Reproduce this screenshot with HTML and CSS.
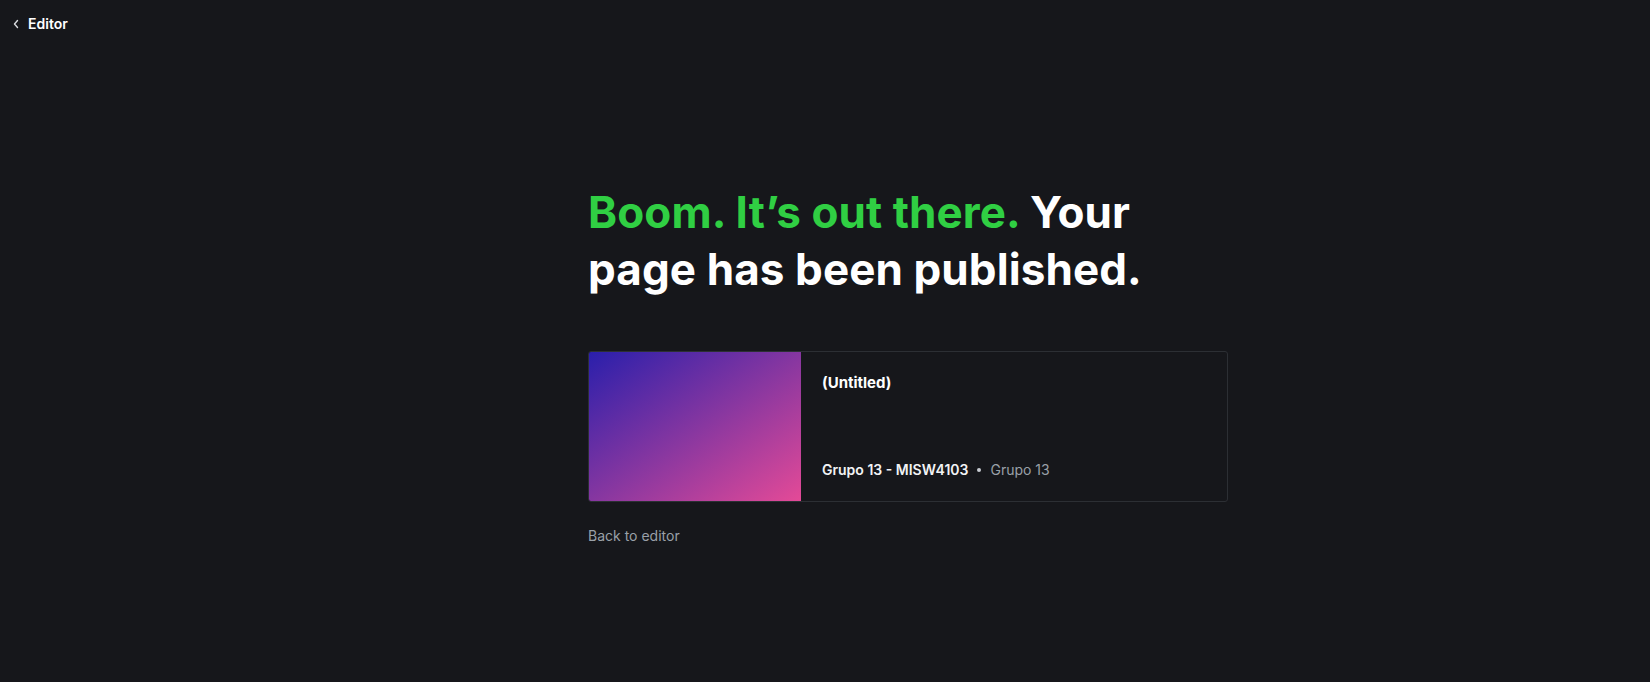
FILE: index.html
```html
<!DOCTYPE html>
<html lang="en">
<head>
<meta charset="utf-8">
<title>Published</title>
<link rel="stylesheet" href="styles.css">
</head>
<body>
<header class="topbar">
  <a class="back-link" href="#">
    <svg class="chev" width="8" height="10" viewBox="0 0 8 10" aria-hidden="true"><path d="M5.5 1.5L2.5 5l3 3.5" fill="none" stroke="currentColor" stroke-width="1.4" stroke-linecap="round" stroke-linejoin="round"/></svg>
    <span>Editor</span>
  </a>
</header>
<main class="main">
  <section class="content">
    <h1 class="headline"><span class="green">Boom. It’s out there.</span> Your page has been published.</h1>
    <div class="card">
      <div class="card-image"></div>
      <div class="card-body">
        <div class="card-title">(Untitled)</div>
        <div class="card-meta">
          <span class="site">Grupo 13 - MISW4103</span>
          <span class="dot"></span>
          <span class="author">Grupo 13</span>
        </div>
      </div>
    </div>
    <a class="back-editor" href="#">Back to editor</a>
  </section>
</main>
</body>
</html>
```
FILE: styles.css
```css
* { box-sizing: border-box; }
html, body { margin: 0; padding: 0; }
body {
  background: #16171b;
  color: #ffffff;
  font-family: Inter, "Noto Sans", "Liberation Sans", sans-serif;
  width: 1650px;
  height: 682px;
  overflow: hidden;
}
a { text-decoration: none; color: inherit; }
.topbar {
  height: 44px;
  padding: 13px 0 0 12px;
}
.back-link {
  display: inline-flex;
  align-items: center;
  gap: 8px;
  font-size: 14px;
  line-height: 20px;
  font-weight: 600;
  color: #ffffff;
}
.chev { color: #d8dade; }
.main {
  padding: 140px 0 0 588px;
}
.content {
  width: 640px;
}
.headline {
  margin: 0;
  max-width: 600px;
  font-size: 44px;
  line-height: 57px;
  font-weight: 700;
  letter-spacing: 0.1px;
  color: #ffffff;
}
.green { color: #30cf43; }
.card {
  margin-top: 53px;
  height: 151px;
  display: flex;
  border: 1px solid #2c2f34;
  border-radius: 3px;
  overflow: hidden;
  background: #16171b;
}
.card-image {
  width: 212px;
  flex: none;
  background: linear-gradient(to bottom right, #2a1fab 0%, #8937a0 52%, #e44a97 100%);
}
.card-body {
  flex: 1;
  display: flex;
  flex-direction: column;
  justify-content: space-between;
  padding: 20px 20px 21px 21px;
}
.card-title {
  font-size: 15px;
  line-height: 22px;
  font-weight: 700;
  color: #ffffff;
}
.card-meta {
  display: flex;
  align-items: center;
  font-size: 14px;
  line-height: 20px;
}
.site { font-weight: 600; color: #f2f3f5; }
.dot {
  width: 4px;
  height: 4px;
  border-radius: 50%;
  background: #c8ccd2;
  margin: 0 9px 0 9px;
}
.author { color: #9aa0a8; }
.back-editor {
  display: block;
  margin-top: 24px;
  font-size: 14px;
  line-height: 20px;
  color: #9aa0a8;
}
```
